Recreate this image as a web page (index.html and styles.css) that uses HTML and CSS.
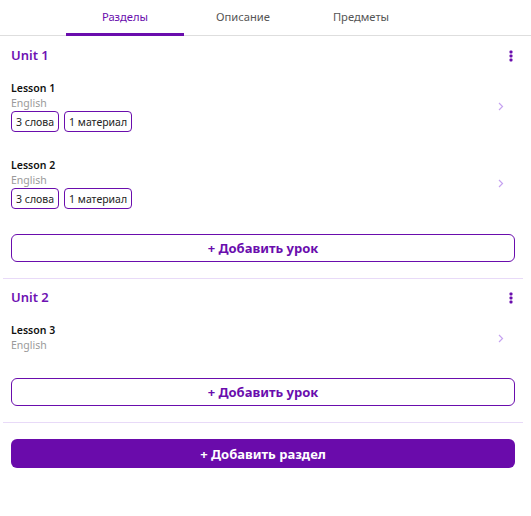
FILE: index.html
```html
<!DOCTYPE html>
<html lang="ru">
<head>
<meta charset="utf-8">
<link rel="stylesheet" href="styles.css">
</head>
<body>
<nav class="tabs">
  <div class="tab active">Разделы</div>
  <div class="tab">Описание</div>
  <div class="tab">Предметы</div>
</nav>
<main class="content">
  <section class="unit first">
    <div class="unit-head">
      <span class="unit-title">Unit 1</span>
      <svg class="kebab" width="6" height="12" viewBox="0 0 6 12"><rect x="1.5" y="0.5" width="3" height="3" rx="1"/><rect x="1.5" y="4.5" width="3" height="3" rx="1"/><rect x="1.5" y="8.5" width="3" height="3" rx="1"/></svg>
    </div>
    <div class="lesson">
      <div class="lesson-body">
        <div class="lesson-title">Lesson 1</div>
        <div class="lesson-sub">English</div>
        <div class="badges"><span class="badge">3 слова</span><span class="badge">1 материал</span></div>
      </div>
      <svg class="chev" width="6" height="9" viewBox="0 0 6 9"><polyline points="1,1 4.5,4.5 1,8"/></svg>
    </div>
    <div class="lesson">
      <div class="lesson-body">
        <div class="lesson-title">Lesson 2</div>
        <div class="lesson-sub">English</div>
        <div class="badges"><span class="badge">3 слова</span><span class="badge">1 материал</span></div>
      </div>
      <svg class="chev" width="6" height="9" viewBox="0 0 6 9"><polyline points="1,1 4.5,4.5 1,8"/></svg>
    </div>
    <button class="btn-outline">+ Добавить урок</button>
  </section>
  <section class="unit">
    <div class="unit-head">
      <span class="unit-title">Unit 2</span>
      <svg class="kebab" width="6" height="12" viewBox="0 0 6 12"><rect x="1.5" y="0.5" width="3" height="3" rx="1"/><rect x="1.5" y="4.5" width="3" height="3" rx="1"/><rect x="1.5" y="8.5" width="3" height="3" rx="1"/></svg>
    </div>
    <div class="lesson">
      <div class="lesson-body">
        <div class="lesson-title">Lesson 3</div>
        <div class="lesson-sub">English</div>
      </div>
      <svg class="chev" width="6" height="9" viewBox="0 0 6 9"><polyline points="1,1 4.5,4.5 1,8"/></svg>
    </div>
    <button class="btn-outline">+ Добавить урок</button>
  </section>
  <div class="add-wrap">
    <button class="btn-fill">+ Добавить раздел</button>
  </div>
</main>
</body>
</html>
```

FILE: styles.css
```css
* { box-sizing: border-box; }
html, body { margin: 0; padding: 0; background: #fff; }
body {
  font-family: "Noto Sans", "Open Sans", sans-serif;
  color: #111;
  width: 531px;
}
.tabs {
  display: flex;
  height: 36px;
  padding-left: 66px;
  border-bottom: 1px solid #dedede;
}
.tab {
  width: 118px;
  height: 36px;
  margin-bottom: -1px;
  border-bottom: 3px solid transparent;
  display: flex;
  align-items: center;
  justify-content: center;
  font-size: 11.2px;
  color: #555;
  padding-bottom: 1px;
}
.tab.active {
  color: #6a0dad;
  border-bottom-color: #6a0dad;
}
.content {
  margin: 0 8px 0 3px;
}
.unit {
  padding: 0 8px 16px;
  border-bottom: 1px solid #e8daf8;
}
.unit.first { margin-top: 1px; }
.unit-head {
  display: flex;
  align-items: center;
  justify-content: space-between;
  padding: 9px 0 5px;
  height: 32px;
}
.unit-title {
  font-size: 13px;
  line-height: 18px;
  font-weight: 600;
  color: #6e12b3;
}
.kebab {
  fill: #6a0dad;
  margin-right: 1px;
  margin-top: 2px;
}
.lesson {
  display: flex;
  align-items: center;
  padding: 12px 0 14px;
}
.lesson-body { flex: 1; }
.lesson-title {
  font-size: 10.5px;
  line-height: 15px;
  font-weight: 600;
  color: #111;
}
.lesson-sub {
  font-size: 10.5px;
  line-height: 15px;
  color: #9a9a9a;
}
.badges {
  display: flex;
  gap: 5px;
}
.badge {
  height: 21px;
  display: inline-flex;
  align-items: center;
  padding: 0 4px;
  border: 1px solid #6a0dad;
  border-radius: 4px;
  font-size: 10.5px;
  color: #222;
}
.chev {
  fill: none;
  stroke: #c6a3f0;
  stroke-width: 1.2;
  margin-right: 11px;
}
.btn-outline, .btn-fill {
  display: block;
  width: 100%;
  font-family: inherit;
  font-size: 13px;
  font-weight: 700;
  border-radius: 6px;
  cursor: pointer;
}
.btn-outline {
  margin-top: 11px;
  height: 28px;
  background: #fff;
  color: #6a0dad;
  border: 1px solid #6a0dad;
  padding: 0;
}
.add-wrap { padding: 16px 8px 0; }
.btn-fill {
  height: 29px;
  background: #6a0bab;
  color: #fff;
  border: none;
  padding: 0;
}
```
